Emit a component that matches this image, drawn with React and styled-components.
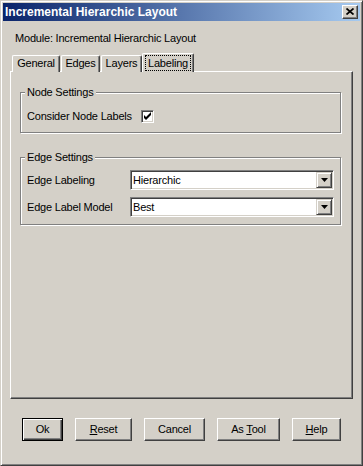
import React from "react";
import styled, { createGlobalStyle } from "styled-components";

const Global = createGlobalStyle`
  html, body { margin: 0; padding: 0; background: #d4d0c8; }
  body {
    font-family: "Liberation Sans", Arial, sans-serif;
    font-size: 11px;
    letter-spacing: -0.2px;
    color: #000;
  }
  * { box-sizing: border-box; }
`;

const Window = styled.div`
  width: 363px;
  height: 466px;
  display: flex;
  flex-direction: column;
  background: #d4d0c8;
  border: 1px solid;
  border-color: #d4d0c8 #404040 #404040 #d4d0c8;
  box-shadow: inset 1px 1px #fff, inset -1px -1px #808080;
  padding: 2px;
`;

const TitleBar = styled.div`
  height: 18px;
  flex: none;
  display: flex;
  align-items: center;
  justify-content: space-between;
  padding: 0 2px 0 2px;
  background: linear-gradient(to right, #0a246a, #a6caf0);
`;

const TitleText = styled.div`
  color: #fff;
  font-weight: bold;
  font-size: 12px;
  letter-spacing: 0;
  line-height: 18px;
`;

const CaptionButton = styled.div`
  width: 16px;
  height: 14px;
  background: #d4d0c8;
  border: 1px solid;
  border-color: #fff #404040 #404040 #fff;
  box-shadow: inset -1px -1px #808080;
  display: flex;
  align-items: center;
  justify-content: center;
  padding: 0 1px 1px 0;
`;

const Body = styled.div`
  flex: 1;
  display: flex;
  flex-direction: column;
  padding: 10px 7px 22px 7px;
`;

const ModuleLabel = styled.div`
  line-height: 14px;
  height: 14px;
  margin-left: 5px;
  margin-bottom: 8px;
`;

const TabRow = styled.div`
  display: flex;
  height: 19px;
  margin-bottom: -1px;
  padding-left: 2px;
  position: relative;
  z-index: 1;
`;

const Tab = styled.div`
  width: ${(p) => p.$w}px;
  height: ${(p) => (p.$active ? 19 : 17)}px;
  margin-top: ${(p) => (p.$active ? 0 : 2)}px;
  margin-left: ${(p) => p.$ml || 0}px;
  background: #d4d0c8;
  border-top: 1px solid #fff;
  border-left: 1px solid #fff;
  border-right: 1px solid #404040;
  border-radius: 2px 2px 0 0;
  box-shadow: inset -1px 0 #808080;
  display: flex;
  justify-content: center;
  align-items: flex-start;
  padding-top: ${(p) => (p.$active ? 1 : 0)}px;
  line-height: 14px;
`;

const FocusBox = styled.div`
  border: 1px dotted #000;
  padding: 0 2px;
  line-height: 14px;
  height: 16px;
`;

const Panel = styled.div`
  flex: 1;
  display: flex;
  flex-direction: column;
  gap: 24px;
  background: #d4d0c8;
  border-top: 1px solid #fff;
  border-left: 1px solid #fff;
  border-right: 1px solid #404040;
  border-bottom: 1px solid #404040;
  box-shadow: inset -1px -1px #808080;
  padding: 20px 11px 0 9px;
`;

const Group = styled.div`
  position: relative;
  border: 1px solid #808080;
  box-shadow: 1px 1px 0 #fff, inset 1px 1px 0 #fff;
  padding: ${(p) => p.$pad};
  display: flex;
  flex-direction: column;
  gap: 7px;
`;

const Legend = styled.div`
  position: absolute;
  top: -8px;
  left: 4px;
  padding: 0 2px;
  line-height: 14px;
  background: #d4d0c8;
`;

const Row = styled.div`
  display: flex;
  align-items: center;
`;

const Label = styled.div`
  width: ${(p) => p.$w}px;
  flex: none;
  line-height: 14px;
`;

const CheckBox = styled.div`
  width: 13px;
  height: 13px;
  background: #fff;
  border: 1px solid;
  border-color: #808080 #fff #fff #808080;
  box-shadow: inset 1px 1px #404040, inset -1px -1px #d4d0c8;
  position: relative;
`;

const CheckSvg = styled.svg`
  position: absolute;
  left: -1px;
  top: -1px;
`;

const Combo = styled.div`
  flex: 1;
  height: 20px;
  display: flex;
  background: #fff;
  border: 1px solid;
  border-color: #808080 #fff #fff #808080;
  box-shadow: inset 1px 1px #404040, inset -1px -1px #d4d0c8;
  padding: 1px;
`;

const ComboValue = styled.div`
  flex: 1;
  padding-left: 1px;
  line-height: 16px;
`;

const DropButton = styled.div`
  width: 16px;
  height: 16px;
  background: #d4d0c8;
  border: 1px solid;
  border-color: #d4d0c8 #404040 #404040 #d4d0c8;
  box-shadow: inset 1px 1px #fff, inset -1px -1px #808080;
  display: flex;
  align-items: center;
  justify-content: center;
`;

const ButtonRow = styled.div`
  display: flex;
  gap: 12px;
  margin-top: 19px;
  margin-left: 12px;
`;

const Button = styled.div`
  width: ${(p) => p.$w}px;
  height: 23px;
  display: flex;
  align-items: center;
  justify-content: center;
  background: #d4d0c8;
  border: 1px solid;
  border-color: ${(p) => (p.$default ? "#000" : "#fff #404040 #404040 #fff")};
  box-shadow: ${(p) =>
    p.$default
      ? "inset 1px 1px #fff, inset -1px -1px #404040, inset -2px -2px #808080"
      : "inset -1px -1px #808080"};
  line-height: 14px;
  padding-bottom: 1px;
`;

const ButtonText = styled.span`
  white-space: pre;
`;

const Arrow = () => (
  <svg width="7" height="4" viewBox="0 0 7 4">
    <polygon points="0,0 7,0 3.5,4" fill="#000" />
  </svg>
);

const CloseIcon = () => (
  <svg width="8" height="7" viewBox="0 0 8 7">
    <path d="M0.5 0.5 L7.5 6.5 M7.5 0.5 L0.5 6.5" stroke="#000" strokeWidth="1.7" fill="none" />
  </svg>
);

export default function App() {
  return (
    <>
      <Global />
      <Window>
        <TitleBar>
          <TitleText>Incremental Hierarchic Layout</TitleText>
          <CaptionButton>
            <CloseIcon />
          </CaptionButton>
        </TitleBar>
        <Body>
          <ModuleLabel>Module: Incremental Hierarchic Layout</ModuleLabel>
          <TabRow>
            <Tab $w={48}>General</Tab>
            <Tab $w={39} $ml={1}>Edges</Tab>
            <Tab $w={41} $ml={1}>Layers</Tab>
            <Tab $w={52} $active>
              <FocusBox>Labeling</FocusBox>
            </Tab>
          </TabRow>
          <Panel>
            <Group $pad="16px 6px 9px 6px">
              <Legend>Node Settings</Legend>
              <Row>
                <Label $w={114}>Consider Node Labels</Label>
                <CheckBox>
                  <CheckSvg width="13" height="13" viewBox="0 0 13 13">
                    <polygon points="3,5 5,7 10,2 10,5 5,10 3,8" fill="#000" />
                  </CheckSvg>
                </CheckBox>
              </Row>
            </Group>
            <Group $pad="12px 6px 7px 6px">
              <Legend>Edge Settings</Legend>
              <Row>
                <Label $w={103}>Edge Labeling</Label>
                <Combo>
                  <ComboValue>Hierarchic</ComboValue>
                  <DropButton>
                    <Arrow />
                  </DropButton>
                </Combo>
              </Row>
              <Row>
                <Label $w={103}>Edge Label Model</Label>
                <Combo>
                  <ComboValue>Best</ComboValue>
                  <DropButton>
                    <Arrow />
                  </DropButton>
                </Combo>
              </Row>
            </Group>
          </Panel>
          <ButtonRow>
            <Button $w={41} $default><ButtonText>Ok</ButtonText></Button>
            <Button $w={57}><ButtonText><u>R</u>eset</ButtonText></Button>
            <Button $w={61}><ButtonText>Cancel</ButtonText></Button>
            <Button $w={63}><ButtonText>As <u>T</u>ool</ButtonText></Button>
            <Button $w={49}><ButtonText><u>H</u>elp</ButtonText></Button>
          </ButtonRow>
        </Body>
      </Window>
    </>
  );
}
